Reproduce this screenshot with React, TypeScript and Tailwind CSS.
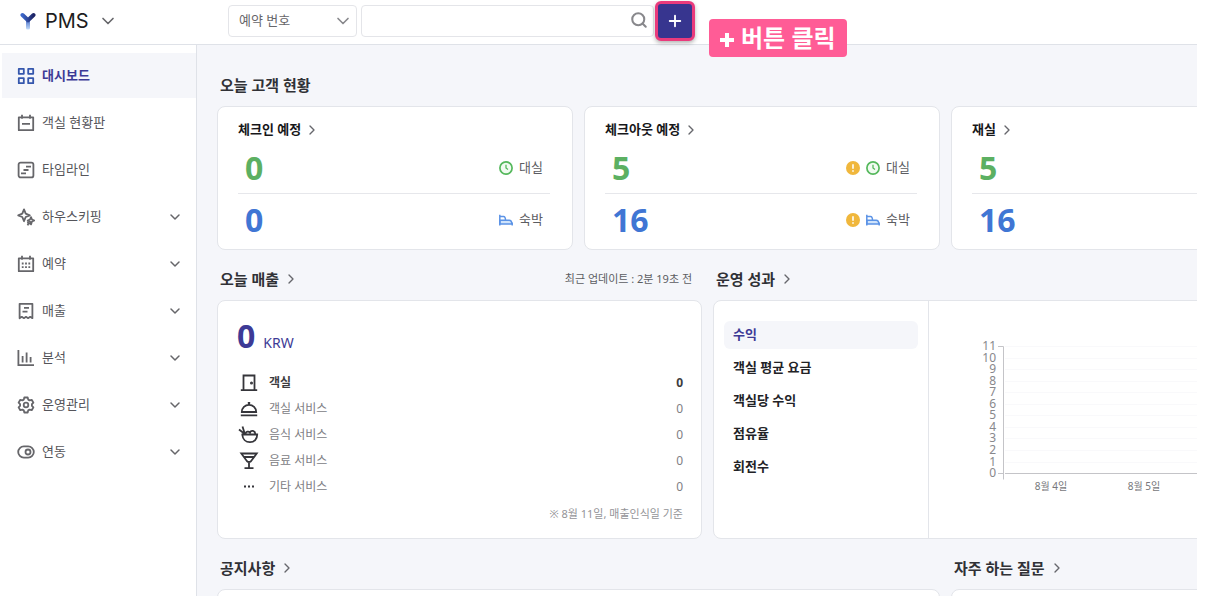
import type { ReactNode } from "react";
import { ChevronDown, ChevronRight, Plus, Search } from "lucide-react";

type IconProps = { children: ReactNode; className?: string };

const Icon = ({ children, className = "size-[18px]" }: IconProps) => (
    <svg viewBox="0 0 18 18" fill="none" stroke="currentColor" strokeWidth="1.8" className={`shrink-0 ${className}`} aria-hidden="true">
        {children}
    </svg>
);

const Logo = () => (
    <svg viewBox="0 0 16 18" className="w-4 h-[18px]" fill="none" strokeWidth="4" aria-hidden="true">
        <defs>
            <linearGradient id="stem" x1="0" y1="0" x2="0" y2="1">
                <stop offset="0" stopColor="#3f66c4" />
                <stop offset="1" stopColor="#c3dcfa" />
            </linearGradient>
            <linearGradient id="arm" x1="0" y1="0" x2="1" y2="0">
                <stop offset="0" stopColor="#3c66c8" />
                <stop offset="1" stopColor="#1d2466" />
            </linearGradient>
        </defs>
        <rect x="6" y="7" width="4" height="10.5" rx="1.5" fill="url(#stem)" />
        <path d="M2.5 3 8 8.3 13.5 3" stroke="url(#arm)" strokeLinecap="round" strokeLinejoin="round" />
    </svg>
);

const menu = [
    {
        title: "대시보드",
        icon: <path d="M1.8 1.8h5v5h-5zM11.2 1.8h5v5h-5zM1.8 11.2h5v5h-5zM11.2 11.2h5v5h-5z" strokeLinejoin="round" />,
        active: true,
    },
    {
        title: "객실 현황판",
        icon: <path d="M1.8 3.3h14.4v12.9H1.8zM5 .8v4M13 .8v4M5 9.8h8" strokeLinejoin="round" />,
    },
    {
        title: "타임라인",
        icon: (
            <>
                <rect x="1.6" y="1.6" width="14.8" height="14.8" rx="2" />
                <path d="M9 5.6h5M6.5 9h5M4 12.4h5" />
            </>
        ),
    },
    {
        title: "하우스키핑",
        icon: (
            <>
                <path d="M7 1.4 8.7 5.6 12.8 7.3 8.7 9 7 13.2 5.3 9 1.2 7.3 5.3 5.6z" strokeLinejoin="round" />
                <path d="m14 9.2 1 2.3 2.3 1-2.3 1-1 2.9-1-2.9-2.3-1 2.3-1z" strokeLinejoin="round" />
                <path d="m10.6 13.4.6 1.4 1.4.6-1.4.6-.6 1.3" strokeLinejoin="round" />
            </>
        ),
        open: true,
    },
    {
        title: "예약",
        icon: (
            <>
                <path d="M1.8 3.3h14.4v12.9H1.8zM5 .8v4M13 .8v4" strokeLinejoin="round" />
                <path d="M4.8 8.5h8.6M4.8 12.2h8.6" strokeDasharray="1.8 1.5" />
            </>
        ),
        open: true,
    },
    {
        title: "매출",
        icon: (
            <path d="M2.6 1.8h12.8v14.4l-2.2-1.4-2.1 1.4L9 14.8l-2.1 1.4-2.1-1.4-2.2 1.4zM7 5.8h5M5.5 9.6h5" strokeLinejoin="round" />
        ),
        open: true,
    },
    {
        title: "분석",
        icon: <path d="M1.4 1v15.2H17M5.6 7v6.5M9.6 3.5v10M13.6 8v5.5" />,
        open: true,
    },
    {
        title: "운영관리",
        icon: (
            <>
                <path
                    d="m7.3 1.5h3.4l.5 2.1 1.4.8 2.1-.6 1.7 2.9-1.5 1.5v1.6l1.5 1.5-1.7 2.9-2.1-.6-1.4.8-.5 2.1H7.3l-.5-2.1-1.4-.8-2.1.6-1.7-2.9 1.5-1.5V8.2L1.6 6.7l1.7-2.9 2.1.6 1.4-.8z"
                    strokeLinejoin="round"
                />
                <circle cx="9" cy="9" r="2.3" />
            </>
        ),
        open: true,
    },
    {
        title: "연동",
        icon: (
            <>
                <rect x="1.2" y="3.4" width="15.6" height="11.2" rx="5.6" />
                <circle cx="11" cy="9" r="2.5" />
            </>
        ),
        open: true,
    },
];

const guests = [
    { title: "체크인 예정", day: 0, night: 0, warn: false, labels: true },
    { title: "체크아웃 예정", day: 5, night: 16, warn: true, labels: true },
    { title: "재실", day: 5, night: 16, warn: false, labels: false },
];

const sales = [
    {
        title: "객실",
        icon: (
            <>
                <path d="M3.5 16V1.5h11V16M.8 16.2h16.4" />
                <circle cx="11.5" cy="9" r=".6" fill="currentColor" />
            </>
        ),
    },
    {
        title: "객실 서비스",
        icon: <path d="M1.8 12a7.2 7.2 0 0 1 14.4 0zM.8 15.4h16.4M9 2v3M7.8 2.8h2.4" />,
    },
    {
        title: "음식 서비스",
        icon: (
            <>
                <path d="M1.5 8.5h15.7c0 4.5-3 7.7-7.2 7.7S2.7 13 2.2 8.500M-1 3.500l6.500 5M2.500.500l2.500 8" />
                <path d="M5.500 8c.2-2.600 3.200-3.200 4.500-1.400C11 3.800 15 4.400 15.300 8" />
            </>
        ),
    },
    {
        title: "음료 서비스",
        icon: <path d="M1.300 1.500h15.400L11 9.200q-2 1.600-4 0zM4 5h10M9 10v6M4.500 16.200h9" />,
    },
    {
        title: "기타 서비스",
        icon: <path d="M4 8.500h2M8 8.500h2M12 8.500h2" />,
    },
];

const metrics = ["수익", "객실 평균 요금", "객실당 수익", "점유율", "회전수"];
const levels = [11, 10, 9, 8, 7, 6, 5, 4, 3, 2, 1, 0];
const days = ["8월 4일", "8월 5일"];

const Warn = () => (
    <svg viewBox="0 0 14 14" className="size-[14px]" role="img" aria-label="주의">
        <circle cx="7" cy="7" r="7" fill="#f0b73c" />
        <path d="M7 3.2v4.6M7 9.2v1.6" stroke="#fff" strokeWidth="1.6" />
    </svg>
);

const Clock = () => (
    <svg viewBox="0 0 14 14" className="size-[14px]" fill="none" stroke="#55b85c" strokeWidth="1.7" aria-hidden="true">
        <circle cx="7" cy="7" r="6.1" fill="#f1fbf1" />
        <path d="M7 3.8V7l2 1.5" strokeWidth="1.3" />
    </svg>
);

const Bed = () => (
    <svg viewBox="0 0 14 14" className="size-[14px]" fill="none" stroke="#5b93e6" strokeWidth="1.5" aria-hidden="true">
        <path d="M.9 11V7.300h9.300c1.500 0 2.500 1.200 2.700 3.700z" fill="#cfe3fb" />
        <path d="M.8 1.800v10.700M.8 3.500h3.700c1.500 0 2 1.500 2 4M13.200 9.500v3" />
    </svg>
);

const SectionTitle = ({ title, link = true, note }: { title: string; link?: boolean; note?: string }) => (
    <div className="flex h-[50px] items-center justify-between pt-2 pl-[3px] pr-[10px]">
        <h2 className="text-[15px] font-bold text-[#303136]">
            {link ? (
                <a href="#" className="flex items-center gap-1">
                    {title}
                    <ChevronRight className="size-4 text-[#66676c]" strokeWidth={2} />
                </a>
            ) : (
                title
            )}
        </h2>
        {note && <span className="text-[11px] text-[#5c5d62]">{note}</span>}
    </div>
);

const Header = () => (
    <header className="flex h-[45px] shrink-0 items-center border-b border-[#dfe2e8] bg-white pb-[2px]">
        <div className="w-[228px] shrink-0 pl-5">
            <button type="button" className="flex items-center gap-[9px] text-[#1d1d22]">
                <Logo />
                <span className="font-['Inter',sans-serif] text-xl leading-6">PMS</span>
                <ChevronDown className="size-5 text-[#66666a]" strokeWidth={2} />
            </button>
        </div>
        <div className="flex items-center">
            <div className="relative mr-1">
                <select aria-label="검색 조건" className="h-8 w-[129px] appearance-none rounded border border-[#e4e5e9] bg-white pl-[10px] text-[13px] text-[#66666a]">
                    <option>예약 번호</option>
                </select>
                <ChevronDown className="pointer-events-none absolute top-1.5 right-1 size-5 text-[#88888c]" strokeWidth={2} />
            </div>
            <div className="relative">
                <input type="text" aria-label="검색" className="h-8 w-[293px] rounded border border-[#e4e5e9] bg-white pl-3 pr-9 text-[13px]" />
                <button type="button" aria-label="검색하기" className="absolute top-[6px] right-[6px] text-[#88888c]">
                    <Search className="size-[18px]" strokeWidth={2.75} />
                </button>
            </div>
            <div className="relative ml-[1px]">
                <button type="button" aria-label="추가" className="flex size-10 items-center justify-center rounded-md border-3 border-[#ea3a7c] bg-[#37358f] text-white shadow-[0_2px_4px_rgba(0,0,0,0.3)]">
                    <Plus className="size-[18px]" strokeWidth={2.5} />
                </button>
                <div className="absolute top-[18px] left-[54px] z-10 flex h-[38px] items-center gap-[7px] rounded bg-[#ff5c96] px-[11px] text-2xl font-bold whitespace-nowrap text-white">
                    <svg viewBox="0 0 14 14" className="mt-1 size-[14px]" stroke="currentColor" strokeWidth="4" aria-hidden="true">
                        <path d="M7 0v14M0 7h14" />
                    </svg>
                    버튼 클릭
                </div>
            </div>
        </div>
    </header>
);

const Sidebar = () => (
    <nav className="w-[197px] shrink-0 border-r border-[#dfe2e8] bg-white pt-2 pl-[2px]">
        <ul className="flex flex-col gap-[2px]">
            {menu.map((item) => (
                <li key={item.title}>
                    <a
                        href="#"
                        className={`flex h-[45px] items-center gap-[7px] pl-[15px] pr-[13px] text-[13px] ${item.active ? "bg-[#f5f6fa] font-bold text-[#3d3a96]" : "text-[#55555a]"}`}
                    >
                        <Icon className={item.active ? "size-[18px] text-[#3557ad]" : "size-[18px] text-[#66666a]"}>{item.icon}</Icon>
                        <span className="flex-1">{item.title}</span>
                        {item.open && <ChevronDown className="size-4 text-[#66666a]" strokeWidth={2.25} />}
                    </a>
                </li>
            ))}
        </ul>
    </nav>
);

const GuestCard = ({ title, day, night, warn, labels }: (typeof guests)[number]) => (
    <section className="rounded-lg border border-[#e3e5ea] bg-white pt-3 pr-[22px] pb-[3px] pl-[20px]">
        <h3 className="text-[13px] font-bold text-[#17171a]">
            <a href="#" className="flex h-[22px] items-center gap-[3px]">
                {title}
                <ChevronRight className="size-4 text-[#66676c]" strokeWidth={2} />
            </a>
        </h3>
        <div className="flex h-[53px] items-center justify-between border-b border-[#e6e7eb] px-[7px] pt-[2px]">
            <strong className="text-[32px] leading-10 font-bold text-[#5cb062]">{day}</strong>
            {labels && (
                <span className="flex items-center gap-[6px] text-[13px] text-[#5c5d62]">
                    {warn && <Warn />}
                    <Clock />
                    대실
                </span>
            )}
        </div>
        <div className="flex h-[52px] items-center justify-between px-[7px]">
            <strong className="text-[32px] leading-10 font-bold text-[#4076d4]">{night}</strong>
            {labels && (
                <span className="flex items-center gap-[6px] text-[13px] text-[#5c5d62]">
                    {warn && <Warn />}
                    <Bed />
                    숙박
                </span>
            )}
        </div>
    </section>
);

const SalesCard = () => (
    <div className="rounded-lg border border-[#e3e5ea] bg-white pt-[11px] pr-[18px] pb-[14px] pl-[19px]">
        <p className="flex h-12 items-baseline gap-2 text-[#3d3a96]">
            <strong className="text-[32px] leading-[48px] font-bold">0</strong>
            <span className="text-sm">KRW</span>
        </p>
        <table className="mt-[10px] w-full text-xs text-[#808084]">
            <tbody>
                {sales.map((item, i) => (
                    <tr key={item.title} className={`h-[26px] ${i === 0 ? "font-bold text-[#3c3c40]" : ""}`}>
                        <th scope="row" className={`p-0 text-left ${i === 0 ? "font-bold" : "font-normal"}`}>
                            <span className="flex items-center gap-[11px] pl-[3px]">
                                <Icon className="size-[18px] overflow-visible text-[#35353a]">{item.icon}</Icon>
                                {item.title}
                            </span>
                        </th>
                        <td className="p-0 text-right">0</td>
                    </tr>
                ))}
            </tbody>
        </table>
        <p className="mt-1 text-right text-[11px] leading-5 text-[#949498]">※ 8월 11일, 매출인식일 기준</p>
    </div>
);

const Chart = () => (
    <svg className="h-full w-full" role="img" aria-label="수익 차트">
        {levels.map((level, i) => {
            const y = 45 + Math.round(i * 11.55);
            return (
                <g key={level}>
                    <line x1="76" x2="100%" y1={y + 0.5} y2={y + 0.5} stroke={level === 0 ? "#c4c4c8" : "#f9f9fb"} />
                    <text x="67" y={y + 4} textAnchor="end" fontSize="12" fill="#88888c">
                        {level}
                    </text>
                </g>
            );
        })}
        <path d="M69 45.5h5.5v133M69 172.5h6" fill="none" stroke="#c4c4c8" />
        {days.map((day, i) => (
            <text key={day} x={122 + i * 93} y="189" textAnchor="middle" fontSize="10" fill="#77777b">
                {day}
            </text>
        ))}
    </svg>
);

const PerformanceCard = () => (
    <div className="flex flex-1 rounded-lg border border-[#e3e5ea] bg-white">
        <ul className="flex w-[215px] shrink-0 flex-col gap-[5px] border-r border-[#e3e5ea] pt-5 pr-[10px] pl-[10px]">
            {metrics.map((metric, i) => (
                <li key={metric}>
                    <button
                        type="button"
                        className={`h-7 w-full rounded-md pl-[9px] text-left text-[13px] font-bold ${i === 0 ? "bg-[#f5f6fa] text-[#3d3a96]" : "text-[#222226]"}`}
                    >
                        {metric}
                    </button>
                </li>
            ))}
        </ul>
        <div className="flex-1">
            <Chart />
        </div>
    </div>
);

const App = () => {
    return (
        <div className="flex h-screen flex-col overflow-hidden bg-white pr-[10px] font-['Noto_Sans','Noto_Sans_CJK_KR',sans-serif]">
            <Header />
            <div className="flex min-h-0 flex-1">
                <Sidebar />
                <main className="min-w-0 flex-1 overflow-hidden bg-[#f5f6fa] pt-[11px] pl-5">
                    {/* wider than the viewport, the right side is cut off */}
                    <div className="min-w-[1090px]">
                        <SectionTitle title="오늘 고객 현황" link={false} />
                        <div className="grid grid-cols-3 gap-[11px]">
                            {guests.map((guest) => (
                                <GuestCard key={guest.title} {...guest} />
                            ))}
                        </div>

                        <div className="flex gap-[11px]">
                            <section className="w-[485px] shrink-0">
                                <SectionTitle title="오늘 매출" note="최근 업데이트 : 2분 19초 전" />
                                <SalesCard />
                            </section>
                            <section className="flex flex-1 flex-col">
                                <SectionTitle title="운영 성과" />
                                <PerformanceCard />
                            </section>
                        </div>

                        <div className="grid grid-cols-3 gap-[11px]">
                            <section className="col-span-2">
                                <SectionTitle title="공지사항" />
                                <div className="h-40 rounded-lg border border-[#e3e5ea] bg-white"></div>
                            </section>
                            <section>
                                <SectionTitle title="자주 하는 질문" />
                                <div className="h-40 rounded-lg border border-[#e3e5ea] bg-white"></div>
                            </section>
                        </div>
                    </div>
                </main>
            </div>
        </div>
    );
};

export default App;
